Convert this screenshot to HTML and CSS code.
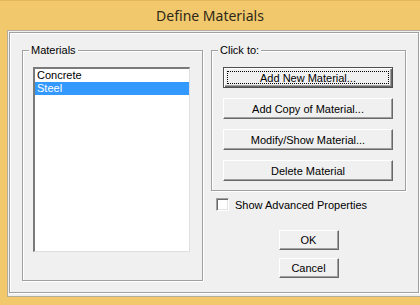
FILE: index.html
```html
<!DOCTYPE html>
<html lang="en">
<head>
    <meta charset="UTF-8">
    <title>Define Materials</title>
    <link rel="stylesheet" href="styles.css">
</head>
<body>
    <div class="titlebar">Define Materials</div>

    <div class="client">
        <div class="frame">
            <!-- Left: list of materials -->
            <div class="group materials">
                <span class="legend">Materials</span>
                <ul class="listbox">
                    <li>Concrete</li>
                    <li class="selected">Steel</li>
                </ul>
            </div>

            <!-- Right: actions -->
            <div class="side">
                <div class="group actions">
                    <span class="legend">Click to:</span>
                    <button class="btn wide default"><span class="focus">Add New Material...</span></button>
                    <button class="btn wide">Add Copy of Material...</button>
                    <button class="btn wide">Modify/Show Material...</button>
                    <button class="btn wide">Delete Material</button>
                </div>

                <label class="check">
                    <span class="box"></span>
                    <span>Show Advanced Properties</span>
                </label>

                <div class="dialog-buttons">
                    <button class="btn small">OK</button>
                    <button class="btn small">Cancel</button>
                </div>
            </div>
        </div>
    </div>
</body>
</html>
```

FILE: styles.css
```css
/* Window chrome */
body {
    margin: 0;
    width: 420px;
    height: 305px;
    overflow: hidden;
    background-color: #f1c96c;
    font-family: "Liberation Sans", Arial, sans-serif;
    font-size: 11px;
    color: #000;
}

.titlebar {
    height: 29px;
    border-top: 1px solid #e4b85a;
    line-height: 29px;
    text-align: center;
    font-family: "Noto Sans", "Open Sans", sans-serif;
    font-size: 14px;
    color: #2e2818;
}

.client {
    box-sizing: border-box;
    height: 267px;
    margin-left: 7px;
    border: 1px solid #b4ad9c;
    border-right: none;
    background-color: #f0f0f0;
    padding: 1px 1px 0 1px;
}

/* Etched inner frame */
.frame {
    box-sizing: border-box;
    height: 261px;
    border: 1px solid #a0a0a0;
    box-shadow: inset 1px 1px 0 #fff, 1px 1px 0 #fff;
    padding: 17px 0 0 12px;
    display: flex;
    gap: 8px;
}

/* Group boxes */
.group {
    position: relative;
    box-sizing: border-box;
    border: 1px solid #a0a0a0;
    box-shadow: inset 1px 1px 0 #fff, 1px 1px 0 #fff;
}

.legend {
    position: absolute;
    top: -7px;
    left: 6px;
    padding: 0 2px;
    line-height: 13px;
    background-color: #f0f0f0;
}

.materials {
    width: 181px;
    height: 231px;
    padding: 16px 0 0 10px;
}

/* List box */
.listbox {
    box-sizing: border-box;
    width: 157px;
    height: 185px;
    margin: 0;
    padding: 0;
    list-style: none;
    background-color: #fff;
    border-style: solid;
    border-width: 2px 1px 1px 2px;
    border-color: #7a7a7a #dedede #dedede #7a7a7a;
}

.listbox li {
    height: 13px;
    line-height: 13px;
    padding-left: 2px;
}

.listbox li.selected {
    background-color: #3399ff;
    color: #fff;
}

/* Right column */
.side {
    width: 195px;
    display: flex;
    flex-direction: column;
}

.actions {
    height: 141px;
    padding: 16px 0 0 11px;
    display: flex;
    flex-direction: column;
    gap: 10px;
}

/* Classic buttons */
.btn {
    box-sizing: border-box;
    padding: 0;
    font-family: inherit;
    font-size: 11px;
    color: #000;
    background-color: #f0f0f0;
    border: 1px solid;
    border-color: #fff #696969 #696969 #fff;
    box-shadow: inset -1px -1px 0 #a0a0a0;
}

.btn.wide {
    width: 170px;
    height: 21px;
}

.btn.default {
    border: 1px solid #505050;
    box-shadow: inset 1px 1px 0 #fff, inset -1px -1px 0 #696969, inset -2px -2px 0 #a0a0a0;
    padding: 3px;
}

.focus {
    display: flex;
    align-items: center;
    justify-content: center;
    height: 100%;
    box-sizing: border-box;
    border: 1px dotted #000;
}

.btn.small {
    width: 60px;
    height: 20px;
}

/* Checkbox row */
.check {
    display: flex;
    align-items: center;
    gap: 6px;
    margin: 7px 0 0 5px;
    height: 13px;
}

.box {
    box-sizing: border-box;
    width: 13px;
    height: 13px;
    background-color: #fff;
    border: 1px solid;
    border-color: #a0a0a0 #fff #fff #a0a0a0;
    box-shadow: inset 1px 1px 0 #696969, inset -1px -1px 0 #e3e3e3;
}

.dialog-buttons {
    display: flex;
    flex-direction: column;
    align-items: center;
    gap: 8px;
    margin-top: 19px;
}
```
